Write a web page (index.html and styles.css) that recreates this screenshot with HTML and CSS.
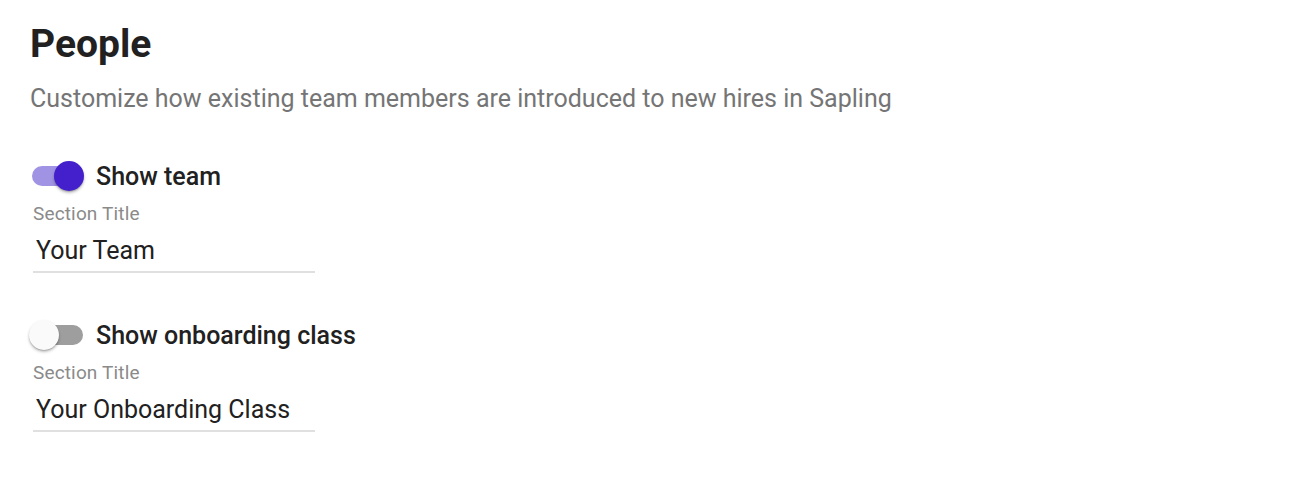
FILE: index.html
```html
<!DOCTYPE html>
<html lang="en">
<head>
    <meta charset="UTF-8">
    <meta name="viewport" content="width=device-width, initial-scale=1.0">
    <title>People</title>
    <link rel="stylesheet" href="styles.css">
</head>
<body>
    <div class="page">
        <h1>People</h1>
        <p class="subtitle">Customize how existing team members are introduced to new hires in Sapling</p>

        <div class="section">
            <label class="toggle-row">
                <span class="switch on">
                    <span class="track"></span>
                    <span class="thumb"></span>
                </span>
                <span class="toggle-label">Show team</span>
            </label>
            <div class="field">
                <label class="field-label" for="team-title">Section Title</label>
                <input type="text" id="team-title" value="Your Team">
            </div>
        </div>

        <div class="section">
            <label class="toggle-row">
                <span class="switch">
                    <span class="track"></span>
                    <span class="thumb"></span>
                </span>
                <span class="toggle-label">Show onboarding class</span>
            </label>
            <div class="field">
                <label class="field-label" for="class-title">Section Title</label>
                <input type="text" id="class-title" value="Your Onboarding Class">
            </div>
        </div>
    </div>
</body>
</html>
```

FILE: styles.css
```css
body {
    font-family: Roboto, "Noto Sans", sans-serif;
    margin: 0;
    padding: 0;
    background-color: #fff;
    color: #212121;
}

.page {
    padding: 21px 30px;
}

h1 {
    font-size: 39px;
    font-weight: 700;
    margin: 0;
    line-height: 46px;
}

.subtitle {
    font-size: 25px;
    color: #757575;
    margin: 17px 0 0;
    line-height: 30px;
}

.section {
    margin-top: 45px;
}

.toggle-row {
    display: flex;
    align-items: center;
    gap: 12px;
    height: 34px;
}

.switch {
    position: relative;
    width: 54px;
    height: 34px;
    flex-shrink: 0;
}

.track {
    position: absolute;
    left: 2px;
    top: 7px;
    width: 51px;
    height: 20px;
    border-radius: 10px;
    background-color: #9e9e9e;
}

.thumb {
    position: absolute;
    left: -1px;
    top: 2px;
    width: 30px;
    height: 30px;
    border-radius: 50%;
    background-color: #fafafa;
    box-shadow: 0 2px 3px rgba(0, 0, 0, 0.25), 0 1px 1px rgba(0, 0, 0, 0.14);
}

.switch.on .track {
    background-color: #a093e3;
}

.switch.on .thumb {
    left: 24px;
    background-color: #4420cc;
}

.toggle-label {
    font-size: 25px;
    font-weight: 500;
    color: #212121;
}

.field {
    width: 282px;
    margin-left: 3px;
}

.field-label {
    display: block;
    font-size: 19px;
    color: #8a8a8a;
    letter-spacing: 0.15px;
    line-height: 22px;
    margin-top: 10px;
}

input[type="text"] {
    display: block;
    width: 100%;
    box-sizing: border-box;
    font-family: inherit;
    font-size: 25px;
    line-height: 29px;
    color: #212121;
    border: none;
    border-bottom: 2px solid #e0e0e0;
    padding: 11px 3px 6px;
    margin: 0;
    outline: none;
    background: transparent;
}
```
